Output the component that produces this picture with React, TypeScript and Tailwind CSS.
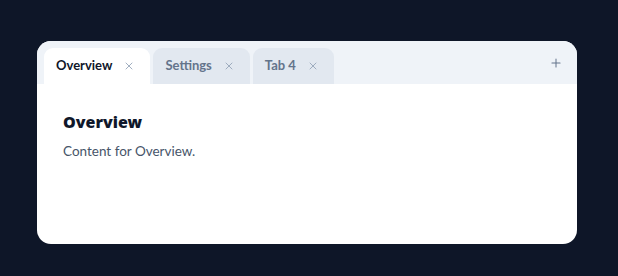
import { Plus, X } from "lucide-react";

const tabs = [
  { id: "overview", label: "Overview" },
  { id: "settings", label: "Settings" },
  { id: "tab4", label: "Tab 4" },
];

function App() {
  const active = "overview";

  return (
    <div
      className="h-[276px] w-[618px] bg-[#0e1628] pl-[37px] pt-[41px]"
      style={{ fontFamily: 'Lato, "Noto Sans", sans-serif' }}
    >
      <div className="flex h-[203px] w-[540px] flex-col overflow-hidden rounded-[14px] bg-white">
        <div className="flex h-[43px] shrink-0 items-end gap-[3px] bg-[#eff3f8] pl-[7px] pr-[14px]">
          {tabs.map((tab) => (
            <div
              key={tab.id}
              className={
                tab.id === active
                  ? "flex h-[36px] items-center rounded-t-[9px] bg-white pl-[12px] pr-[15px] text-[13px] font-bold text-[#0f172a]"
                  : "flex h-[36px] items-center rounded-t-[9px] bg-[#e2e8f0] pl-[12px] pr-[15px] text-[13px] font-bold text-[#64748b]"
              }
            >
              <span>{tab.label}</span>
              <X className="ml-[11px] h-[12px] w-[12px] text-[#94a3b8]" strokeWidth={1.75} />
            </div>
          ))}
          <div className="ml-auto flex h-[43px] items-center">
            <Plus className="h-[14px] w-[14px] text-[#64748b]" strokeWidth={1.75} />
          </div>
        </div>
        <div className="px-[26px] pt-[26px]">
          <h2 className="font-['Noto_Sans',sans-serif] text-[16px] leading-[24px] font-black text-[#0f172a]">
            Overview
          </h2>
          <p className="mt-[7px] text-[13.5px] leading-[20px] text-[#475569]">Content for Overview.</p>
        </div>
      </div>
    </div>
  );
}

export default App;
